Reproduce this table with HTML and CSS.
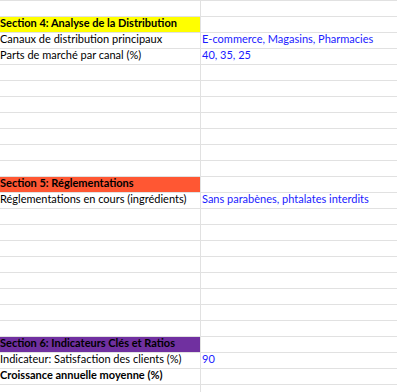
FILE: index.html
```html
<!DOCTYPE html>
<html lang="fr">
<head>
<meta charset="utf-8">
<link rel="stylesheet" href="styles.css">
</head>
<body>
<div class="sheet">
  <div class="c a"></div><div class="c b"></div>
  <div class="c a bold sec-yellow">Section 4: Analyse de la Distribution</div><div class="c b"></div>
  <div class="c a">Canaux de distribution principaux</div><div class="c b val">E-commerce, Magasins, Pharmacies</div>
  <div class="c a">Parts de marché par canal (%)</div><div class="c b val">40, 35, 25</div>
  <div class="c a"></div><div class="c b"></div>
  <div class="c a"></div><div class="c b"></div>
  <div class="c a"></div><div class="c b"></div>
  <div class="c a"></div><div class="c b"></div>
  <div class="c a"></div><div class="c b"></div>
  <div class="c a"></div><div class="c b"></div>
  <div class="c a"></div><div class="c b"></div>
  <div class="c a bold sec-orange">Section 5: Réglementations</div><div class="c b"></div>
  <div class="c a">Réglementations en cours (ingrédients)</div><div class="c b val">Sans parabènes, phtalates interdits</div>
  <div class="c a"></div><div class="c b"></div>
  <div class="c a"></div><div class="c b"></div>
  <div class="c a"></div><div class="c b"></div>
  <div class="c a"></div><div class="c b"></div>
  <div class="c a"></div><div class="c b"></div>
  <div class="c a"></div><div class="c b"></div>
  <div class="c a"></div><div class="c b"></div>
  <div class="c a"></div><div class="c b"></div>
  <div class="c a bold sec-purple">Section 6: Indicateurs Clés et Ratios</div><div class="c b"></div>
  <div class="c a">Indicateur: Satisfaction des clients (%)</div><div class="c b val">90</div>
  <div class="c a bold">Croissance annuelle moyenne (%)</div><div class="c b"></div>
  <div class="c a"></div><div class="c b"></div>
</div>
</body>
</html>
```
FILE: styles.css
```css
html, body {
  margin: 0;
  padding: 0;
  background: #ffffff;
  overflow: hidden;
}
.sheet {
  display: grid;
  grid-template-columns: 200px 1fr;
  width: 397px;
  border-top: 1px solid #e1e1e1;
  font-family: "Lato", "Liberation Sans", sans-serif;
  font-size: 11px;
  color: #000000;
}
.c {
  height: 11px;
  line-height: 11px;
  padding-bottom: 4px;
  border-bottom: 1px solid #e1e1e1;
  white-space: nowrap;
  overflow: hidden;
}
.a {
  padding-left: 0;
}
.b {
  border-left: 1px solid #e1e1e1;
  padding-left: 1px;
}
.bold {
  font-weight: 700;
}
.val {
  color: #1a1aff;
}
.sec-yellow {
  background: #ffff00;
}
.sec-orange {
  background: #ff5733;
}
.sec-purple {
  background: #7030a0;
}
```
